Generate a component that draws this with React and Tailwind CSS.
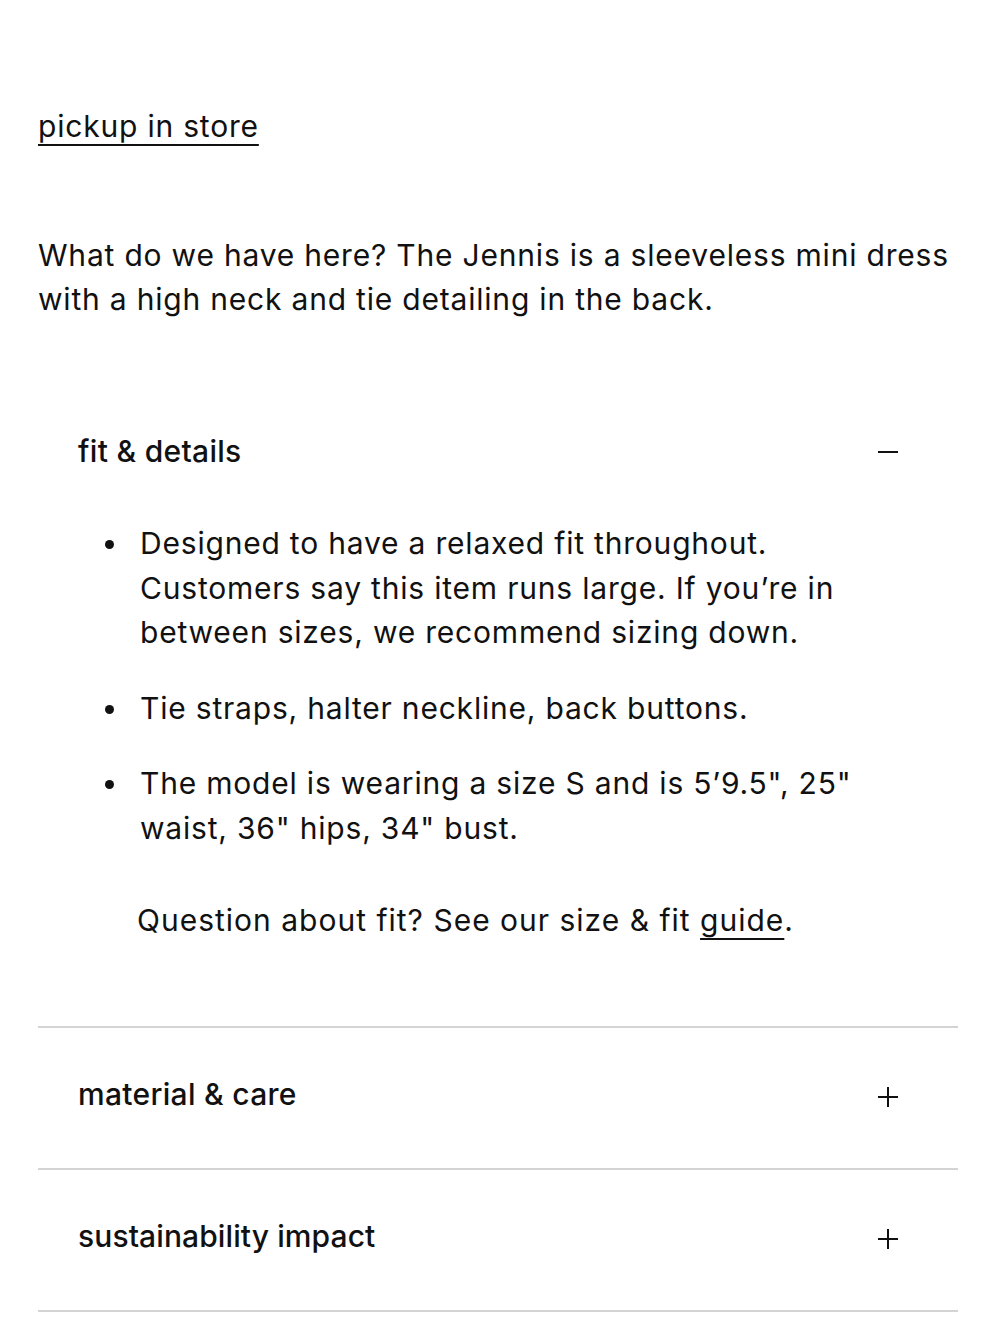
import React from "react";

function Minus() {
  return <span className="block w-[20px] h-[2px] bg-[#111] mt-[2px]" />;
}
function Plus() {
  return (
    <span className="relative block w-[20px] h-[20px] mt-[5px]">
      <span className="absolute left-0 top-[9px] w-[20px] h-[2px] bg-[#111]" />
      <span className="absolute top-0 left-[9px] w-[2px] h-[20px] bg-[#111]" />
    </span>
  );
}

function Bullet({ children }) {
  return (
    <li className="flex items-start">
      <span className="mt-[19px] w-[9px] h-[9px] rounded-full bg-[#111] shrink-0" />
      <span className="ml-[26px]">{children}</span>
    </li>
  );
}

export default function App() {
  const font = { fontFamily: "Inter, 'Liberation Sans', sans-serif" };
  return (
    <div className="bg-white min-h-[1333px] w-[1000px] text-[#111] tracking-[0.8px]" style={font}>
      <div className="pl-[38px] pr-[42px] pt-[104px]">
        <a className="block text-[30px] leading-[44px] underline underline-offset-[7px] decoration-[2px] w-fit">pickup in store</a>
        <p className="mt-[85px] text-[30px] leading-[44px]">
          What do we have here? The Jennis is a sleeveless mini dress with a high neck and tie detailing in the back.
        </p>
        <div className="mt-[108px]">
          <div className="flex items-center justify-between pl-[40px] pr-[60px] h-[44px]">
            <span className="text-[30px] leading-[44px] font-medium tracking-[0.3px]">fit &amp; details</span>
            <Minus />
          </div>
          <ul className="mt-[48px] pl-[67px] pr-[40px] w-[880px] flex flex-col gap-[31px] text-[30px] leading-[44.5px]">
            <Bullet>Designed to have a relaxed fit throughout. Customers say this item runs large. If you’re in between sizes, we recommend sizing down.</Bullet>
            <Bullet>Tie straps, halter neckline, back buttons.</Bullet>
            <Bullet>The model is wearing a size S and is 5’9.5", 25" waist, 36" hips, 34" bust.</Bullet>
          </ul>
          <p className="mt-[48px] pl-[99px] text-[30px] leading-[44px] tracking-[1px]">
            Question about fit? See our size &amp; fit <a className="underline underline-offset-[7px] decoration-[2px]">guide</a>.
          </p>
          <div className="h-[84px]" />
        </div>
        <div className="border-t-2 border-[#d4d4d4] pt-[44px] pb-[52px]">
          <div className="flex items-center justify-between pl-[40px] pr-[60px] h-[44px]">
            <span className="text-[30px] leading-[44px] font-medium tracking-[0.3px]">material &amp; care</span>
            <Plus />
          </div>
        </div>
        <div className="border-t-2 border-[#d4d4d4] pt-[44px] pb-[52px]">
          <div className="flex items-center justify-between pl-[40px] pr-[60px] h-[44px]">
            <span className="text-[30px] leading-[44px] font-medium tracking-[0.1px]">sustainability impact</span>
            <Plus />
          </div>
        </div>
        <div className="border-t-2 border-[#d4d4d4]" />
      </div>
    </div>
  );
}
